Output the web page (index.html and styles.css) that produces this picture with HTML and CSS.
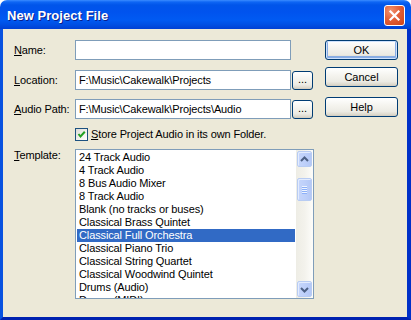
FILE: index.html
```html
<!DOCTYPE html>
<html>
<head>
<meta charset="utf-8">
<link rel="stylesheet" href="styles.css">
</head>
<body>
<div class="window">
  <div class="titlebar">
    <span class="title">New Project File</span>
    <div class="close">
      <svg width="21" height="21" viewBox="0 0 21 21"><path d="M6.5 6.5 L14.5 14.5 M14.5 6.5 L6.5 14.5" stroke="#fff" stroke-width="2.2" stroke-linecap="square"/></svg>
    </div>
  </div>
  <div class="client">
    <div class="form">
      <div class="row r-name">
        <span class="lbl"><u>N</u>ame:</span>
        <div class="field"></div>
      </div>
      <div class="row r-loc">
        <span class="lbl"><u>L</u>ocation:</span>
        <div class="field">F:\Music\Cakewalk\Projects</div>
        <div class="btn browse">...</div>
      </div>
      <div class="row r-audio">
        <span class="lbl"><u>A</u>udio Path:</span>
        <div class="field">F:\Music\Cakewalk\Projects\Audio</div>
        <div class="btn browse">...</div>
      </div>
      <div class="row r-check">
        <span class="chk"><svg width="11" height="11" viewBox="0 0 11 11"><path d="M2.5 5 L4.5 7.5 L8.8 2.8" fill="none" stroke="#21A121" stroke-width="2"/></svg></span>
        <span class="chk-text"><u>S</u>tore Project Audio in its own Folder.</span>
      </div>
      <div class="row r-tpl">
        <span class="lbl tpl-lbl"><u>T</u>emplate:</span>
        <div class="list">
          <div class="items">
            <div class="item">24 Track Audio</div>
            <div class="item">4 Track Audio</div>
            <div class="item">8 Bus Audio Mixer</div>
            <div class="item">8 Track Audio</div>
            <div class="item">Blank (no tracks or buses)</div>
            <div class="item">Classical Brass Quintet</div>
            <div class="item sel">Classical Full Orchestra</div>
            <div class="item">Classical Piano Trio</div>
            <div class="item">Classical String Quartet</div>
            <div class="item">Classical Woodwind Quintet</div>
            <div class="item">Drums (Audio)</div>
            <div class="item">Drums (MIDI)</div>
          </div>
          <div class="scrollbar">
            <div class="sbtn"><svg width="15" height="15" viewBox="0 0 15 15"><path d="M4 9 L7.5 5.5 L11 9" fill="none" stroke="#4D6185" stroke-width="2"/></svg></div>
            <div class="track">
              <div class="thumb">
                <svg width="15" height="23" viewBox="0 0 15 23"><path d="M5 8.5 H10 M5 10.5 H10 M5 12.5 H10 M5 14.5 H10" stroke="#EEF4FE" stroke-width="1"/><path d="M5 9.5 H10 M5 11.5 H10 M5 13.5 H10 M5 15.5 H10" stroke="#8CB0F8" stroke-width="1"/></svg>
              </div>
            </div>
            <div class="sbtn"><svg width="15" height="15" viewBox="0 0 15 15"><path d="M4 6 L7.5 9.5 L11 6" fill="none" stroke="#4D6185" stroke-width="2"/></svg></div>
          </div>
        </div>
      </div>
    </div>
    <div class="buttons">
      <div class="btn push default">OK</div>
      <div class="btn push b-cancel">Cancel</div>
      <div class="btn push b-help">Help</div>
    </div>
  </div>
</div>
</body>
</html>
```

FILE: styles.css
```css
html, body {
  margin: 0;
  padding: 0;
  background: #ffffff;
}
body {
  font-family: "Liberation Sans", Arial, sans-serif;
  font-size: 11px;
  color: #000;
}
.window {
  width: 411px;
  height: 320px;
  display: flex;
  flex-direction: column;
  border-radius: 7px 7px 0 0;
  overflow: hidden;
}
.titlebar {
  height: 29px;
  flex: none;
  display: flex;
  align-items: center;
  justify-content: space-between;
  padding: 0 6px 0 7px;
  box-sizing: border-box;
  background: linear-gradient(to bottom, #3A8CFF 0, #0E66F4 2px, #0055EA 5px, #0053EE 12px, #005AF2 20px, #004EE2 25px, #0040D4 29px);
}
.title {
  color: #fff;
  font-weight: bold;
  font-size: 13px;
  letter-spacing: 0.05px;
  text-shadow: 1px 1px 0 #0A1E8C;
  padding-top: 2px;
}
.close {
  width: 21px;
  height: 21px;
  box-sizing: border-box;
  border: 1px solid #ffffff;
  border-radius: 3px;
  background: radial-gradient(circle at 30% 25%, #F2926E 0, #E2603A 45%, #CF4316 100%);
  display: flex;
  align-items: center;
  justify-content: center;
  margin-top: 1px;
}
.close svg {
  margin: -1px;
}
.client {
  flex: 1;
  display: flex;
  background: #ECE9D8;
  border-left: 3px solid #0852E0;
  border-right: 4px solid #0030C8;
  border-bottom: 3px solid #0022B0;
  padding: 11px 9px 0 11px;
  letter-spacing: -0.12px;
}
.form {
  width: 300px;
  display: flex;
  flex-direction: column;
}
.row {
  display: flex;
  align-items: center;
}
.r-name, .r-loc, .r-audio {
  height: 20px;
}
.r-loc { margin-top: 10px; }
.r-audio { margin-top: 9px; }
.r-check {
  margin-top: 9px;
  height: 13px;
  padding-left: 61px;
}
.r-tpl {
  margin-top: 8px;
  align-items: flex-start;
}
.lbl {
  width: 61px;
  flex: none;
  line-height: 13px;
}
.field {
  width: 216px;
  height: 20px;
  box-sizing: border-box;
  border: 1px solid #7F9DB9;
  background: #fff;
  padding: 0 3px;
  line-height: 18px;
  white-space: nowrap;
  overflow: hidden;
}
.btn {
  box-sizing: border-box;
  border: 1px solid #003C74;
  border-radius: 3px;
  background: linear-gradient(to bottom, #FFFFFF 0, #F5F4EF 40%, #ECEBE4 75%, #DCD8CC 92%, #D0CBBE 100%);
  display: flex;
  align-items: center;
  justify-content: center;
  letter-spacing: 0;
}
.browse {
  width: 21px;
  height: 19px;
  margin-left: 1px;
  line-height: 13px;
  align-items: flex-end;
  padding-bottom: 3px;
}
.chk {
  width: 13px;
  height: 13px;
  box-sizing: border-box;
  border: 1px solid #1C5180;
  background: linear-gradient(135deg, #DCDCD7 0, #F2F2EE 60%, #FFFFFF 100%);
  display: flex;
  align-items: center;
  justify-content: center;
  flex: none;
}
.chk-text {
  margin-left: 3px;
  line-height: 13px;
}
.tpl-lbl {
  margin-top: 0;
}
.list {
  width: 239px;
  height: 150px;
  box-sizing: border-box;
  border: 1px solid #7F9DB9;
  background: #fff;
  display: flex;
  overflow: hidden;
}
.items {
  width: 220px;
  box-sizing: border-box;
  padding: 1px 1px 0 1px;
  overflow: hidden;
}
.item {
  height: 13px;
  line-height: 13px;
  padding-left: 2px;
  white-space: nowrap;
}
.item.sel {
  background: #316AC5;
  color: #fff;
}
.scrollbar {
  width: 17px;
  display: flex;
  flex-direction: column;
  background: linear-gradient(to right, #EEEDE5 0, #F3F2EC 50%, #FDFDFA 100%);
  padding: 1px 0 1px 0;
  box-sizing: border-box;
}
.sbtn, .thumb {
  width: 15px;
  box-sizing: border-box;
  border: 1px solid #B8CCF3;
  border-radius: 2px;
  background: linear-gradient(to right, #C6D6FB 0, #BED0FA 50%, #B4C8F6 100%);
  box-shadow: inset 1px 1px 0 #E3ECFE;
  margin-left: 1px;
  display: flex;
  align-items: center;
  justify-content: center;
}
.sbtn {
  height: 16px;
  flex: none;
}
.sbtn svg, .thumb svg {
  margin: -1px;
}
.track {
  flex: 1;
  padding-top: 11px;
}
.thumb {
  height: 23px;
}
.buttons {
  width: 73px;
  margin-left: 11px;
  display: flex;
  flex-direction: column;
}
.push {
  height: 20px;
  width: 73px;
}
.default {
  box-shadow: inset 0 0 0 1px #CEE1FC, inset 0 -1px 0 2px #89ADE4;
}
.b-cancel { margin-top: 7px; }
.b-help { margin-top: 10px; }
```
